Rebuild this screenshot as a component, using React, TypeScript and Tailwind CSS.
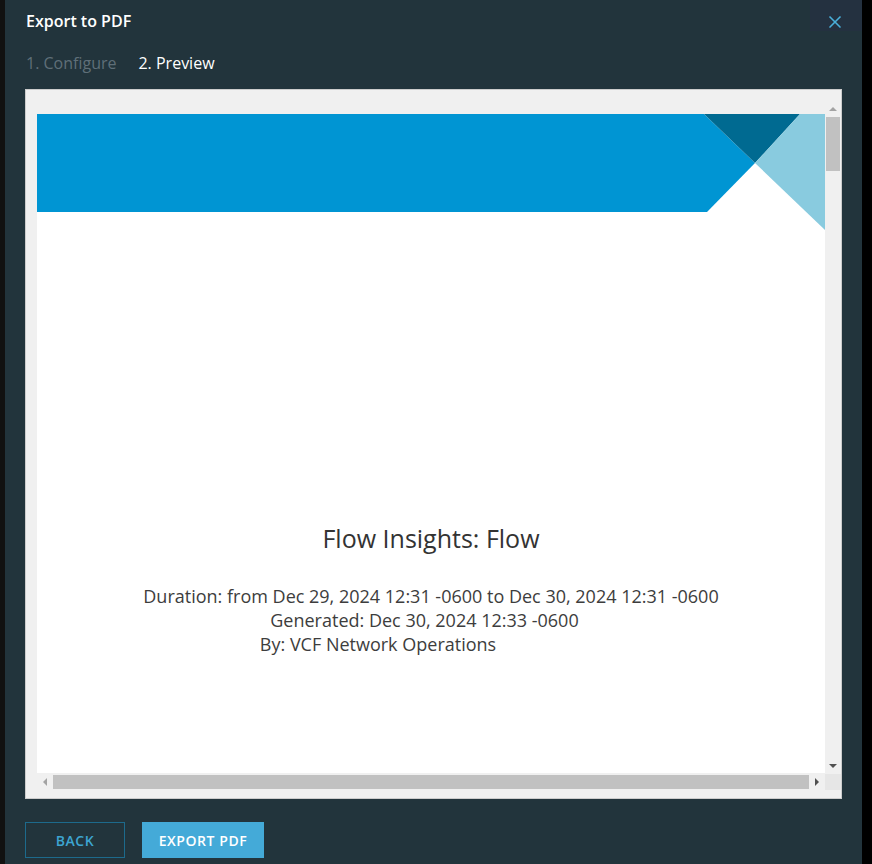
import { X } from 'lucide-react';

function Banner() {
  return (
    <svg width="788" height="116" viewBox="0 0 788 116" className="block">
      <polygon points="0,0 667,0 718,49 670,98 0,98" fill="#0095d3" />
      <polygon points="667,0 763,0 718,49" fill="#006a91" />
      <polygon points="718,49 763,0 788,0 788,116" fill="#89cbdf" />
    </svg>
  );
}

function VScrollbar() {
  return (
    <div className="w-[16px] flex flex-col bg-[#f0f0f0]">
      <div className="h-[16px] flex items-center justify-center">
        <div className="w-0 h-0 border-l-[4px] border-r-[4px] border-b-[4px] border-l-transparent border-r-transparent border-b-[#a3a3a3]" />
      </div>
      <div className="mx-[1px] h-[54px] bg-[#c1c1c1]" />
      <div className="flex-1" />
      <div className="h-[16px] flex items-center justify-center">
        <div className="w-0 h-0 border-l-[4px] border-r-[4px] border-t-[4px] border-l-transparent border-r-transparent border-t-[#505050]" />
      </div>
    </div>
  );
}

function HScrollbar() {
  return (
    <div className="h-[16px] flex">
      <div className="flex-1 flex items-center bg-[#f0f0f0]">
        <div className="w-[16px] flex items-center justify-center">
          <div className="w-0 h-0 border-t-[4px] border-b-[4px] border-r-[4px] border-t-transparent border-b-transparent border-r-[#a3a3a3]" />
        </div>
        <div className="h-[14px] flex-1 bg-[#c1c1c1]" />
        <div className="w-[16px] flex items-center justify-center">
          <div className="w-0 h-0 border-t-[4px] border-b-[4px] border-l-[4px] border-t-transparent border-b-transparent border-l-[#505050]" />
        </div>
      </div>
      <div className="w-[16px] bg-[#e6e6e6]" />
    </div>
  );
}

export default function App() {
  return (
    <div
      className="w-[872px] h-[864px] flex bg-black overflow-hidden"
      style={{ fontFamily: '"Open Sans", "Liberation Sans", sans-serif' }}
    >
      <div className="w-[5px] bg-[#111111]" />

      {/* Modal */}
      <div className="w-[857px] bg-[#22343c] px-[20px] flex flex-col">
        {/* Header */}
        <div className="h-[41px] flex items-center justify-between">
          <h1 className="pl-[1px] text-[16px] font-semibold text-white">Export to PDF</h1>
          <button className="-mr-[20px] self-start h-[31px] w-[52px] pt-[12px] pr-[2px] bg-[#243140] flex items-start justify-center text-[#49afd9]">
            <X size={20} strokeWidth={2} />
          </button>
        </div>

        {/* Steps */}
        <div className="mt-[9px] h-[26px] mb-[13px] flex items-center gap-[22px] text-[16px] pl-[1px]">
          <span className="text-[#5f6f78]">1. Configure</span>
          <span className="text-white">2. Preview</span>
        </div>

        {/* Preview frame */}
        <div className="h-[710px] border border-[#cccccc] bg-[#f0f0f0] pl-[11px] pt-[11px] pb-[8px] flex flex-col">
          <div className="flex-1 flex">
            <div className="flex-1 pt-[13px]">
              <div className="h-[659px] bg-white flex flex-col">
                <Banner />
                <div className="pt-[290px] flex flex-col items-center text-center">
                  <div className="text-[25px] text-[#333333] leading-[36px]">Flow Insights: Flow</div>
                  <div className="mt-[28px] text-[18px] leading-[24px] text-[#3d3d3d]">
                    <div>Duration: from Dec 29, 2024 12:31 -0600 to Dec 30, 2024 12:31 -0600</div>
                    <div className="pr-[13px]">Generated: Dec 30, 2024 12:33 -0600</div>
                    <div className="pr-[106px]">By: VCF Network Operations</div>
                  </div>
                </div>
              </div>
            </div>
            <VScrollbar />
          </div>
          <HScrollbar />
        </div>

        {/* Footer */}
        <div className="mt-[23px] flex gap-[17px]">
          <button className="w-[100px] h-[36px] border border-[#1d6a8c] text-[#3da5d1] text-[14px] font-semibold tracking-[0.04em]">
            BACK
          </button>
          <button className="w-[122px] h-[36px] bg-[#44aad8] text-white text-[14px] font-semibold tracking-[0.04em]">
            EXPORT PDF
          </button>
        </div>
      </div>

      <div className="w-[10px] bg-black" />
    </div>
  );
}
